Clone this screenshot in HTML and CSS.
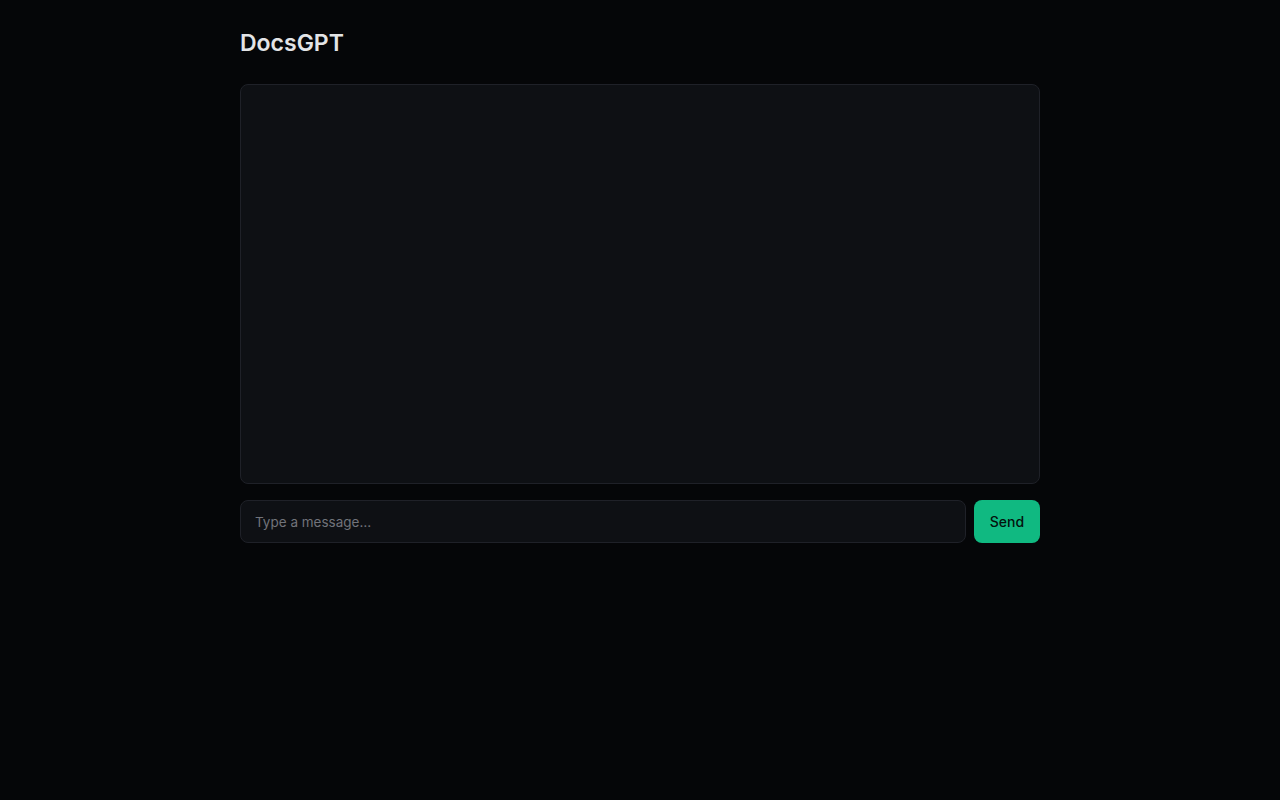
FILE: index.html
```html
<!DOCTYPE html>
<html lang="en">
<head>
<meta charset="utf-8">
<title>DocsGPT</title>
<link rel="stylesheet" href="styles.css">
</head>
<body>
<main class="app">
  <h1 class="title">DocsGPT</h1>
  <section class="chat"></section>
  <form class="composer">
    <input class="composer-input" type="text" placeholder="Type a message…">
    <button class="send-btn" type="button">Send</button>
  </form>
</main>
</body>
</html>
```
FILE: styles.css
```css
* { box-sizing: border-box; }
html, body {
  margin: 0;
  padding: 0;
  background: #050608;
  color: #e5e7eb;
  font-family: Inter, "Liberation Sans", sans-serif;
}
.app {
  width: 800px;
  margin: 0 auto;
  padding-top: 28px;
}
.title {
  margin: 0 0 25px 0;
  font-size: 23px;
  line-height: 31px;
  font-weight: 600;
  color: #e3e4e6;
}
.chat {
  height: 400px;
  background: #0e1014;
  border: 1px solid #1f2128;
  border-radius: 8px;
}
.composer {
  display: flex;
  gap: 8px;
  margin-top: 16px;
}
.composer-input {
  flex: 1;
  height: 43px;
  padding: 0 14px;
  background: #0e1014;
  border: 1px solid #1f2128;
  border-radius: 8px;
  color: #e5e7eb;
  font-family: Inter, "Liberation Sans", sans-serif;
  font-size: 13.5px;
  outline: none;
}
.composer-input::placeholder { color: #71737a; }
.send-btn {
  height: 43px;
  width: 66px;
  padding: 0;
  background: #10b981;
  color: #04120d;
  border: none;
  border-radius: 8px;
  font-family: Inter, "Liberation Sans", sans-serif;
  font-size: 14px;
  font-weight: 500;
}
```
